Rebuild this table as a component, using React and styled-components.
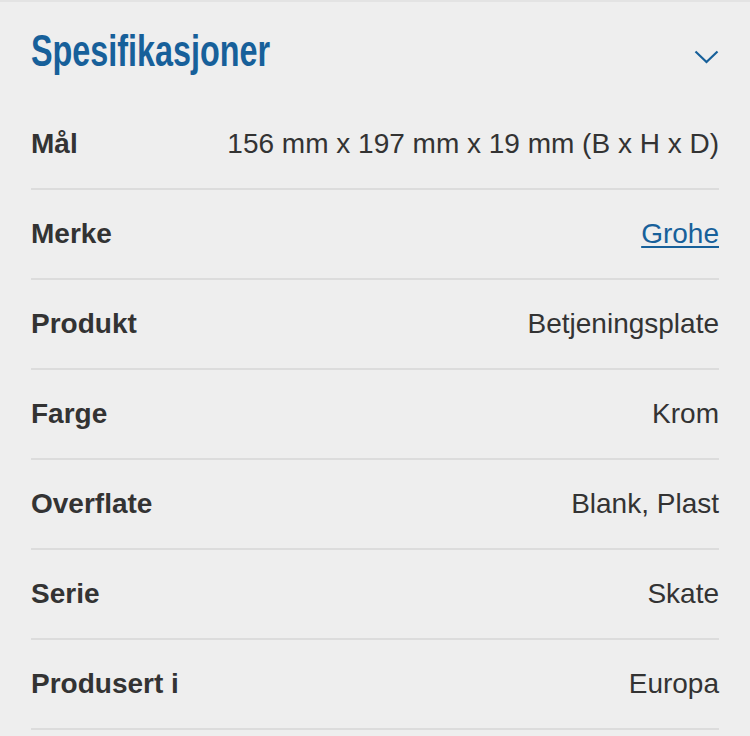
import React from 'react';
import styled, { createGlobalStyle } from 'styled-components';

const GlobalStyle = createGlobalStyle`
  html, body {
    margin: 0;
    padding: 0;
    background: #eeeeee;
  }
  body {
    font-family: 'Liberation Sans', Arial, Helvetica, sans-serif;
  }
`;

const Panel = styled.section`
  background: #eeeeee;
  border-top: 2px solid #e3e3e3;
  padding: 0 31px;
  min-height: 734px;
`;

const Header = styled.div`
  display: flex;
  align-items: center;
  justify-content: space-between;
  height: 98px;
`;

const Title = styled.h2`
  margin: 0;
  font-family: 'Liberation Sans', Arial, sans-serif;
  font-weight: bold;
  font-size: 44px;
  line-height: 1;
  color: #17609a;
  white-space: nowrap;
  transform: scaleX(0.735);
  transform-origin: left center;
`;

const Chevron = styled.svg`
  width: 25px;
  height: 14px;
  margin-top: 12px;
`;

const Row = styled.div`
  display: flex;
  align-items: center;
  justify-content: space-between;
  height: 88px;
  border-bottom: 2px solid #dcdcdc;
  font-size: 28px;
`;

const Label = styled.span`
  font-weight: bold;
  color: #333333;
`;

const Value = styled.span`
  color: #333333;
  text-align: right;
`;

const ValueLink = styled.a`
  color: #17609a;
  text-decoration: underline;
  text-decoration-thickness: 2px;
  text-underline-offset: 3px;
`;

const specs = [
  { label: 'Mål', value: '156 mm x 197 mm x 19 mm (B x H x D)' },
  { label: 'Merke', value: 'Grohe', link: true },
  { label: 'Produkt', value: 'Betjeningsplate' },
  { label: 'Farge', value: 'Krom' },
  { label: 'Overflate', value: 'Blank, Plast' },
  { label: 'Serie', value: 'Skate' },
  { label: 'Produsert i', value: 'Europa' },
];

export default function App() {
  return (
    <>
      <GlobalStyle />
      <Panel>
        <Header>
          <Title>Spesifikasjoner</Title>
          <Chevron viewBox="0 0 25 14" fill="none">
            <path d="M1.5 1.5 L12.5 12 L23.5 1.5" stroke="#17609a" strokeWidth="2.2" />
          </Chevron>
        </Header>
        {specs.map(s => (
          <Row key={s.label}>
            <Label>{s.label}</Label>
            {s.link ? <ValueLink href="#">{s.value}</ValueLink> : <Value>{s.value}</Value>}
          </Row>
        ))}
      </Panel>
    </>
  );
}
